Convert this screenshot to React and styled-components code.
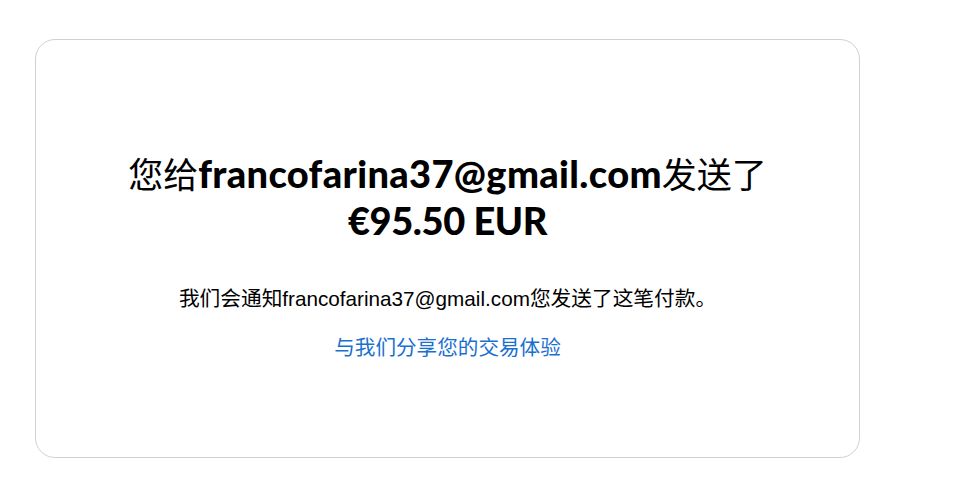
import React from "react";
import styled, { createGlobalStyle } from "styled-components";

const Global = createGlobalStyle`
  html, body { margin: 0; padding: 0; background: #ffffff; }
  body { font-family: "Liberation Sans", "Noto Sans CJK SC", sans-serif; color: #000; }
`;

const Page = styled.div`
  padding: 39px 0 0 35px;
`;

const Card = styled.section`
  box-sizing: border-box;
  width: 825px;
  height: 419px;
  border: 1px solid #d0d0d0;
  border-radius: 20px;
  display: flex;
  flex-direction: column;
  align-items: center;
  padding-top: 110px;
`;

const Heading = styled.h1`
  margin: 0;
  font-family: "Lato", "Noto Sans CJK SC", sans-serif;
  font-weight: 400;
  font-size: 35px;
  line-height: 46px;
  text-align: center;
  color: #000;
`;

const Strong = styled.strong`
  font-weight: 900;
  font-size: 38px;
  letter-spacing: ${(p) => (p.$tight ? "-0.4px" : "0.35px")};
`;

const Body = styled.p`
  margin: 42px 0 0;
  font-family: "Liberation Sans", "Noto Sans CJK SC", sans-serif;
  font-size: 20.7px;
  line-height: 26px;
  text-align: center;
  color: #000;
`;

const Link = styled.a`
  margin-top: 23px;
  font-family: "Liberation Sans", "Noto Sans CJK SC", sans-serif;
  font-size: 20.6px;
  line-height: 26px;
  color: #1a6fcf;
  text-decoration: none;
  cursor: pointer;
`;

export default function App() {
  return (
    <>
      <Global />
      <Page>
        <Card>
          <Heading>
            您给<Strong>francofarina37@gmail.com</Strong>发送了
            <br />
            <Strong $tight>€95.50 EUR</Strong>
          </Heading>
          <Body>我们会通知francofarina37@gmail.com您发送了这笔付款。</Body>
          <Link>与我们分享您的交易体验</Link>
        </Card>
      </Page>
    </>
  );
}
